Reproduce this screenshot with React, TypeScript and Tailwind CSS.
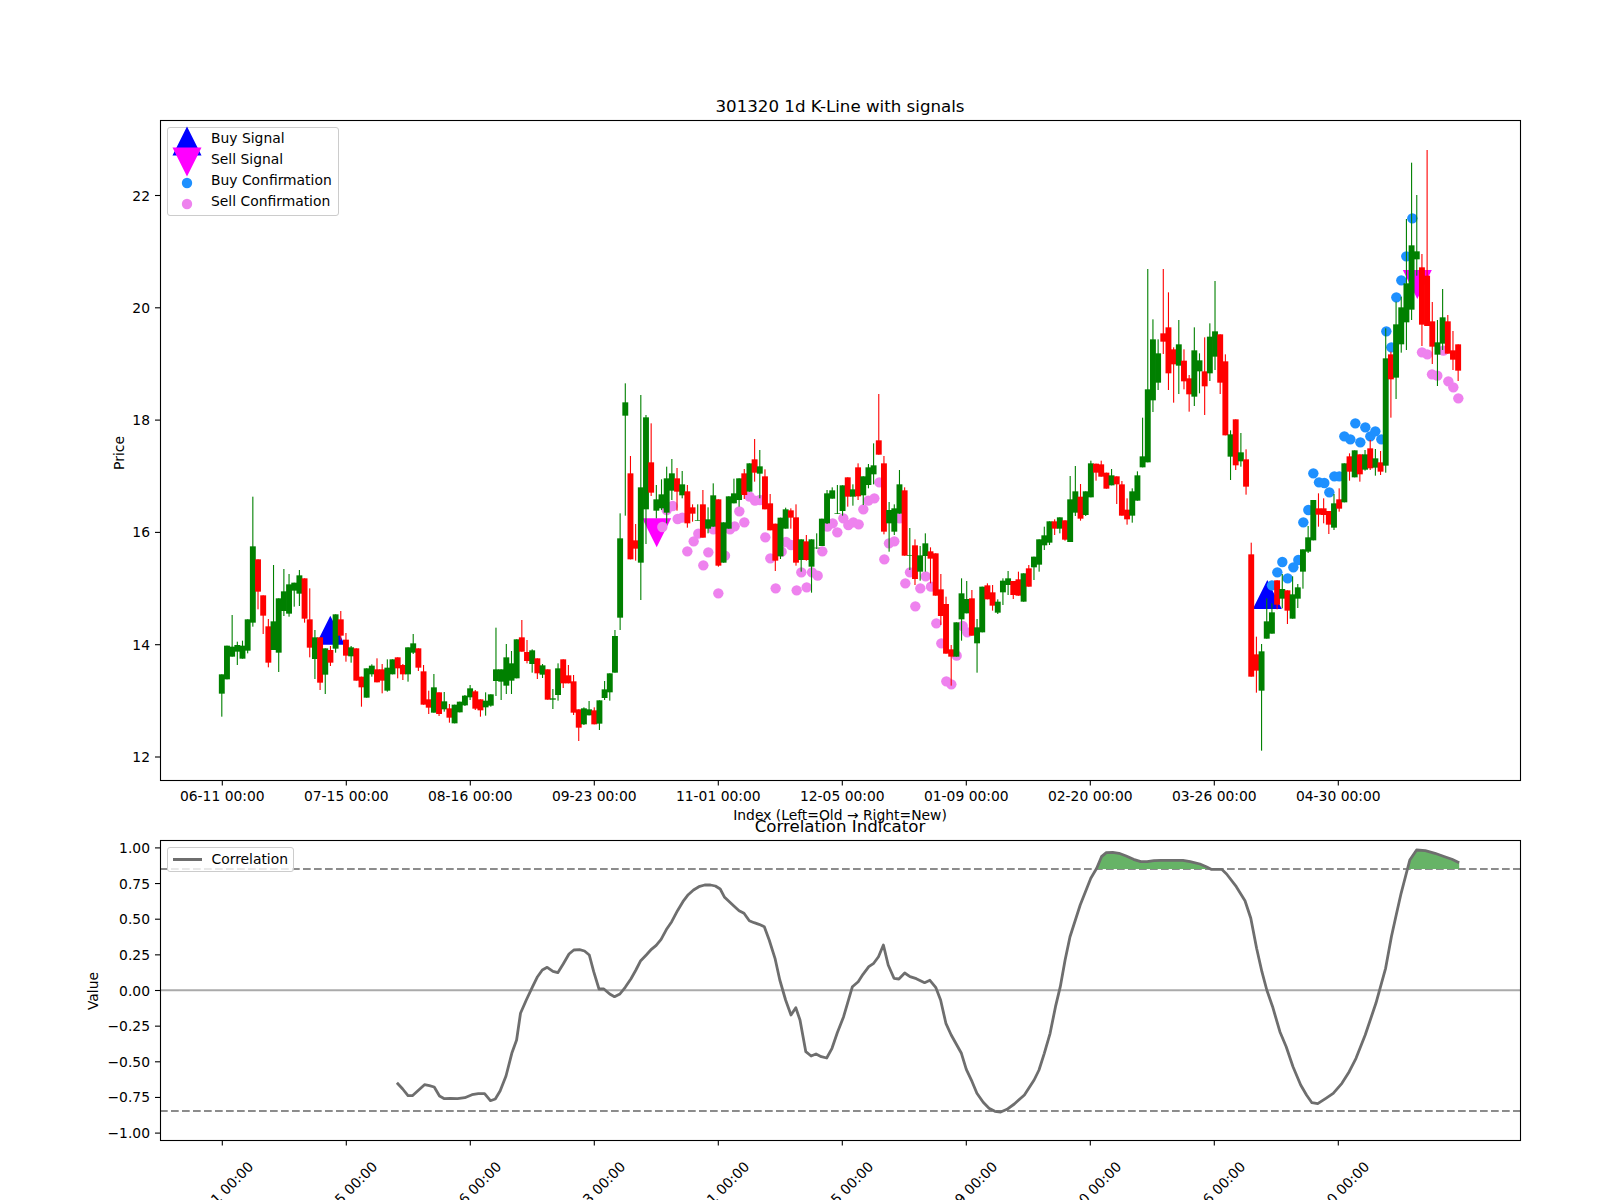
type Candle = ["g" | "r", number, number, number, number];

// candle rows: colour, wick top, body top, body bottom, wick bottom (read off 3x crops, see y0)
const segments: { y0: number; rows: Candle[] }[] = [
  {
    y0: 450,
    rows: [
      ["g",673,673,731,800],["g",587,587,688,688],["g",495,590,620,620],["g",575,585,605,645],["g",572,587,626,626],["g",508,508,602,610],
      ["g",140,289,518,530],["r",328,328,425,478],["r",436,436,497,552],["r",507,529,638,652],["g",345,514,600,600],["g",445,445,608,666],
      ["g",357,424,483,498],["g",372,403,491,500],["g",398,398,422,470],["g",360,376,431,468],["r",385,385,506,518],["r",415,508,593,622],
      ["g",540,562,627,687],["r",562,562,698,720],["g",595,595,674,732],["r",588,600,638,648],["g",493,493,596,608],["r",483,508,557,570],
      ["r",549,569,617,635],["g",588,592,619,638],["r",595,595,692,692],["r",680,680,712,770],["g",655,655,743,743],["g",643,647,673,680],
      ["r",625,658,697,697],["r",642,658,692,730],["g",628,653,722,725],["g",628,628,673,673],["r",622,622,655,685],["r",642,645,673,690],
      ["g",592,592,673,695],["g",552,580,608,612],["r",595,595,653,663],["r",645,664,764,764],["r",722,748,773,792],["g",672,712,788,788],
      ["r",727,727,792,798],["g",726,754,778,785],["r",762,775,803,818],["g",764,764,820,820],["g",755,755,787,787],["g",735,737,766,768],
      ["g",705,715,742,750],["r",720,724,776,780],["r",748,748,781,800],["g",727,752,772,797],["g",733,733,767,770],["g",533,658,693,738],
      ["g",658,658,695,750],["g",582,622,707,732],["g",603,640,692,732],["g",568,568,685,685],["r",510,562,605,605],["r",570,606,633,640],
      ["g",598,601,642,668],["r",625,625,670,687],["g",642,646,674,684],["r",658,658,749,749],["g",717,745,749,777],["g",640,655,735,752],
      ["r",628,628,700,714],["r",645,676,700,700],["r",675,694,788,795],["r",778,778,833,873],["g",772,775,823,825],["g",753,778,796,796],
      ["r",772,781,823,823],["g",751,751,821,840],["g",693,718,744,750],["g",670,670,727,752],
    ],
  },
  {
    y0: 370,
    rows: [
      ["g",780,798,908,908],["g",430,505,743,780],["g",40,97,137,437],["r",258,310,568,568],["r",462,511,536,572],["g",75,352,578,690],
      ["g",135,142,418,522],["r",160,277,368,378],["g",345,388,422,445],["g",328,373,415,420],["g",290,325,428,460],["g",267,310,362,390],
      ["r",294,325,365,422],["g",303,343,376,385],["r",345,364,460,473],["r",403,412,431,455],["g",403,450,452,452],["r",360,403,503,503],
      ["g",412,448,476,490],["g",340,376,470,470],["r",388,388,587,590],["g",457,457,578,578],["g",379,379,476,476],["g",326,370,400,400],
      ["g",325,325,390,410],["r",297,310,375,387],["g",280,280,365,365],["r",207,268,308,335],["g",240,289,311,385],["r",298,319,418,418],
      ["r",372,400,481,481],["r",461,461,572,603],["g",443,443,559,567],["g",413,418,476,476],["r",415,421,443,476],["r",403,442,578,587],
      ["g",508,508,570,605],["r",495,514,570,572],["g",508,508,590,668],["g",490,533,535,537],["g",446,446,528,528],["g",360,370,460,462],
      ["g",352,361,386,386],["g",345,430,432,432],["g",346,346,423,437],["r",322,322,380,410],["g",343,358,380,407],["r",280,292,379,390],
      ["g",319,319,376,405],["g",282,292,345,355],["g",220,286,313,343],["r",72,211,254,254],["r",258,280,485,493],["g",396,420,460,545],
      ["g",403,415,485,495],["g",300,343,431,431],["r",352,361,557,557],["g",474,555,557,600],["r",508,526,627,645],["g",528,556,605,632],
      ["g",490,520,558,605],["r",532,544,566,640],["r",550,550,677,677],["r",612,658,738,765],["r",680,702,851,851],["r",825,838,860,947],
    ],
  },
  {
    y0: 250,
    rows: [
      ["g",1117,1117,1220,1220],["g",985,1030,1108,1172],["g",993,1047,1090,1090],["r",1020,1045,1157,1157],["g",1107,1132,1180,1268],
      ["g",1010,1010,1147,1147],["r",1000,1006,1048,1048],["r",1005,1027,1067,1082],["g",1048,1055,1088,1092],["g",985,992,1027,1065],
      ["g",963,985,1005,1035],["r",993,993,1035,1047],["r",965,988,1037,1037],["g",970,970,1055,1055],["r",945,955,1010,1010],
      ["g",920,920,952,990],["g",868,868,944,965],["g",830,856,886,900],["g",814,814,878,885],["r",808,814,836,855],["g",802,802,836,850],
      ["r",811,811,869,872],["g",678,748,876,876],["g",648,724,788,798],["r",702,740,806,812],["g",724,724,795,798],["g",632,640,742,742],
      ["r",641,641,668,692],["r",632,643,680,680],["r",668,668,716,716],["g",657,676,706,706],["r",679,679,703,762],["r",693,703,797,797],
      ["r",745,779,808,824],["g",715,724,797,818],["g",664,676,752,752],["g",503,619,652,652],["g",57,418,637,637],["g",208,268,451,486],
      ["g",268,310,398,420],["r",57,250,275,312],["r",127,232,370,420],["r",292,298,343,458],["g",210,283,347,432],["r",298,332,394,418],
      ["r",375,385,433,485],["g",232,301,440,468],["g",310,331,364,430],["r",262,364,409,495],["g",220,260,370,393],["g",93,244,320,360],
      ["r",253,253,398,432],["r",313,334,556,556],["g",541,553,620,690],["r",508,508,646,660],["g",549,607,634,650],["r",598,628,710,734],
    ],
  },
  {
    y0: 480,
    rows: [
      ["r",188,223,590,590],["r",470,523,572,638],["g",492,514,632,812],["g",355,424,476,476],["g",370,397,461,461],["r",301,301,374,388],
      ["g",282,327,356,385],["r",331,331,392,432],["g",289,343,416,416],["g",312,322,356,384],["g",208,208,275,326],["g",138,172,215,219],
      ["g",60,60,181,181],["r",40,85,104,140],["r",55,85,105,130],["r",93,93,134,162],["g",42,70,143,150],["r",25,58,86,95],
    ],
  },
  {
    y0: 130,
    rows: [
      ["g",1000,1000,1117,1117],["r",970,979,1025,1052],["g",961,961,1042,1042],["r",973,973,1033,1055],["g",960,973,1019,1022],
      ["r",930,955,1015,1020],["g",957,985,1013,1037],["r",963,997,1025,1035],["g",595,685,1007,1028],["r",665,673,748,863],
      ["g",515,583,743,807],["g",500,532,643,668],["g",267,460,577,660],["g",98,346,539,570],["g",195,364,388,437],["r",372,412,584,648],
      ["r",60,437,588,588],["r",516,574,650,702],["g",570,637,674,768],["g",477,562,641,660],["r",555,574,671,671],["r",603,661,689,720],
      ["r",643,643,722,753],
    ],
  },
];

const candles = segments.flatMap((s) =>
  s.rows.map((r) => ({
    up: r[0] === "g",
    high: s.y0 + r[1] / 3,
    top: s.y0 + r[2] / 3,
    bottom: s.y0 + r[3] / 3,
    low: s.y0 + r[4] / 3,
  }))
);

const candleX = (i: number) => 221.8 + 5.173 * i;

const from3x = (x0: number, y0: number, pts: number[][]) => pts.map(([x, y]) => [x0 + x / 3, y0 + y / 3]);

const sellDots = [
  ...from3x(600, 370, [
    [200,420],[218,408],[187,471],[233,447],[247,443],[262,544],[281,514],[295,491],[310,586],[325,547],[340,478],[355,670],[375,557],
    [390,478],[404,469],[418,424],[433,457],[449,380],[465,392],[480,390],[496,502],[511,565],[527,655],[545,545],[558,516],[573,525],
    [590,661],[604,607],[620,652],[636,607],[653,617],[667,544],[682,470],[698,460],[712,487],[730,445],[745,465],[760,457],[776,463],
    [790,418],[805,392],[823,385],[838,337],[853,568],[867,520],[883,514],[899,445],[916,640],[930,607],[946,709],[961,655],[977,619],
    [993,650],[1009,760],[1024,820],[1039,934],[1054,943],[1070,857],[1088,768],[1102,787],
  ]),
  ...from3x(1230, 130, [[576,667],[592,673],[606,733],[622,737],[640,662],[655,754],[670,772],[685,805]]),
];

const buyDots = [
  ...from3x(1230, 480, [[126,316],[142,277],[157,246],[173,295],[190,262],[205,240]]),
  ...from3x(1230, 130, [
    [220,1177],[235,1140],[250,1030],[267,1057],[283,1059],[298,1087],[313,1039],[328,1039],[343,919],[361,928],[376,880],[391,937],
    [406,892],[421,919],[436,904],[454,928],[469,604],[484,652],[499,502],[514,451],[529,379],[547,265],
  ]),
];

const dateTicks = ["06-11", "07-15", "08-16", "09-23", "11-01", "12-05", "01-09", "02-20", "03-26", "04-30"].map((d, i) => ({
  label: `${d} 00:00`,
  x: 222.3 + 124 * i,
}));

const priceTicks = [22, 20, 18, 16, 14, 12].map((p) => ({ label: String(p), y: 757 - (p - 12) * 56.15 }));

const corrTicks = ["1.00", "0.75", "0.50", "0.25", "0.00", "\u22120.25", "\u22120.50", "\u22120.75", "\u22121.00"].map((label, i) => ({
  label,
  y: 847.9 + 35.65 * i,
}));

// correlation curve, two crops squeezed to 2.063x horizontally and 3x vertically
const curveA = [
  [695,878],[707,897],[718,917],[727,917],[740,900],[752,884],[762,887],[772,891],[783,918],[793,926],[805,925],[820,926],[835,923],[850,914],
  [863,911],[876,911],[888,932],[898,927],[908,903],[920,858],[932,790],[942,750],[950,670],[962,630],[975,590],[985,560],[995,540],[1005,532],
  [1017,544],[1027,548],[1038,522],[1050,492],[1060,480],[1072,479],[1082,483],[1092,495],[1101,545],[1112,597],[1122,597],[1134,612],[1144,620],
  [1155,612],[1166,592],[1178,566],[1188,540],[1198,512],[1210,494],[1220,478],[1230,466],[1240,448],[1252,416],[1262,395],[1274,362],[1285,335],
  [1296,314],[1307,300],[1318,290],[1330,285],[1342,285],[1352,288],[1362,297],[1371,322],[1382,337],[1392,350],[1401,362],[1411,370],[1422,392],
  [1432,398],[1442,403],[1453,410],[1463,450],[1475,505],[1485,570],[1497,630],[1508,675],[1518,653],
];
const curveB = [
  [0,690],[12,785],[23,798],[33,792],[44,800],[55,804],[66,775],[77,728],[90,680],[98,640],[108,590],[120,575],[130,553],[142,530],[152,520],[162,500],
  [172,465],[182,525],[194,565],[204,567],[216,549],[227,560],[240,566],[257,578],[268,571],[280,592],[290,630],[301,700],[312,735],[333,790],[343,838],
  [355,875],[365,910],[378,937],[390,955],[402,964],[414,966],[427,958],[442,942],[463,915],[483,870],[493,840],[504,790],[516,730],[527,650],[537,590],
  [547,510],[557,440],[578,345],[600,265],[612,235],[622,200],[632,188],[645,187],[658,190],[673,198],[688,208],[703,215],[716,215],[730,212],[745,211],
  [770,211],[790,211],[805,215],[825,222],[838,230],[848,238],[870,238],[880,252],[900,290],[918,332],[930,385],[942,475],[953,545],[963,600],[975,650],
  [990,725],[1003,770],[1017,830],[1033,885],[1045,915],[1056,938],[1068,941],[1085,925],[1100,910],[1118,880],[1133,845],[1147,805],[1166,735],[1188,640],
  [1208,535],[1220,440],[1230,375],[1240,310],[1258,210],[1272,180],[1290,182],[1310,190],[1330,200],[1345,208],[1360,218],
];
const toFig = (x0: number) => (p: number[]) => [x0 + p[0] / 2.063, 790 + p[1] / 3];
const pts = (list: number[][]) => list.map((p) => p.map((n) => n.toFixed(1)).join(",")).join(" ");
const corrLine = [...curveA.map(toFig(60)), ...curveB.map(toFig(800))];

const band1 = [[610,237], ...curveB.filter((p) => p[0] > 612 && p[0] < 848), [848,237]].map(toFig(800));
const band2 = [[1255,237], ...curveB.filter((p) => p[0] >= 1258), [1360,237]].map(toFig(800));

const triUp = (x: number, top: number) => `${x},${top} ${x - 14.5},${top + 29} ${x + 14.5},${top + 29}`;
const triDown = (x: number, top: number) => `${x - 14.5},${top} ${x + 14.5},${top} ${x},${top + 29}`;

const BUY_BLUE = "#1e90ff";
const SELL_PINK = "#ee82ee";

const XTicks = ({ y }: { y: number }) => (
  <>
    {dateTicks.map((t) => (
      <line key={t.x} x1={t.x} x2={t.x} y1={y} y2={y + 5} stroke="black" strokeWidth="1.1" />
    ))}
  </>
);

const YTicks = ({ ticks }: { ticks: { label: string; y: number }[] }) => (
  <>
    {ticks.map((t) => (
      <g key={t.label}>
        <line x1={155} x2={160} y1={t.y} y2={t.y} stroke="black" strokeWidth="1.1" />
        <text x={150} y={t.y + 5} textAnchor="end" fontSize="13.89" fill="black">
          {t.label}
        </text>
      </g>
    ))}
  </>
);

const PriceChart = () => (
  <svg viewBox="160 120 1360 660" className="block w-[1360px] h-[660px] overflow-visible">
    <polygon points={triUp(330.3, 615.7)} fill="#0000ff" />
    <polygon points={triDown(656.7, 518.3)} fill="#ff00ff" />
    <polygon points={triUp(1267.3, 580)} fill="#0000ff" />
    <polygon points={triDown(1417.3, 270)} fill="#ff00ff" />
    {sellDots.map(([x, y], i) => (
      <circle key={i} cx={x} cy={y} r="5.2" fill={SELL_PINK} />
    ))}
    {buyDots.map(([x, y], i) => (
      <circle key={i} cx={x} cy={y} r="5.2" fill={BUY_BLUE} />
    ))}
    {candles.map((c, i) => (
      <g key={i} fill={c.up ? "#008000" : "#ff0000"}>
        <rect x={candleX(i) - 0.55} y={c.high} width="1.1" height={c.low - c.high} />
        <rect x={candleX(i) - 2.95} y={c.top} width="5.9" height={c.bottom - c.top} />
      </g>
    ))}
    <rect x="160.5" y="120.5" width="1360" height="660" fill="none" stroke="black" strokeWidth="1.1" />
    <XTicks y={780.5} />
    {dateTicks.map((t) => (
      <text key={t.x} x={t.x} y={801} textAnchor="middle" fontSize="13.89" fill="black">
        {t.label}
      </text>
    ))}
    <YTicks ticks={priceTicks} />
    <text transform="translate(124 453) rotate(-90)" textAnchor="middle" fontSize="13.89" fill="black">
      Price
    </text>
  </svg>
);

const CorrelationChart = () => (
  <svg viewBox="160 840 1360 300" className="block w-[1360px] h-[300px] overflow-visible">
    <line x1="160" x2="1520" y1="990.3" y2="990.3" stroke="#aaaaaa" strokeWidth="2" />
    <line x1="160" x2="1520" y1="869" y2="869" stroke="#8c8c8c" strokeWidth="2" strokeDasharray="7.7 3.3" />
    <line x1="160" x2="1520" y1="1111" y2="1111" stroke="#8c8c8c" strokeWidth="2" strokeDasharray="7.7 3.3" />
    <polygon points={pts(band1)} fill="#66b366" />
    <polygon points={pts(band2)} fill="#66b366" />
    <polyline points={pts(corrLine)} fill="none" stroke="#6e6e6e" strokeWidth="2.8" strokeLinejoin="round" />
    <rect x="160.5" y="840.5" width="1360" height="300" fill="none" stroke="black" strokeWidth="1.1" />
    <XTicks y={1140.5} />
    {dateTicks.map((t) => (
      <text
        key={t.x}
        transform={`translate(${t.x - 1.5} 1194) rotate(-45)`}
        textAnchor="middle"
        dy="5"
        fontSize="13.89"
        fill="black"
      >
        {t.label}
      </text>
    ))}
    <YTicks ticks={corrTicks} />
    <text transform="translate(98 991) rotate(-90)" textAnchor="middle" fontSize="13.89" fill="black">
      Value
    </text>
  </svg>
);

const legendRows = [
  { label: "Buy Signal", mark: <polygon points="14,-1.5 -0.5,27.5 28.5,27.5" fill="#0000ff" /> },
  { label: "Sell Signal", mark: <polygon points="-0.5,-1.5 28.5,-1.5 14,27.5" fill="#ff00ff" /> },
  { label: "Buy Confirmation", mark: <circle cx="14" cy="13" r="5.2" fill={BUY_BLUE} /> },
  { label: "Sell Confirmation", mark: <circle cx="14" cy="13" r="5.2" fill={SELL_PINK} /> },
];

const PriceLegend = () => (
  <div className="absolute left-[7px] top-[7px] w-[172px] h-[89px] rounded-[3px] border border-[#cccccc] bg-white/80 pl-[5px]">
    {legendRows.map((row) => (
      <div key={row.label} className="flex items-center h-[21px] text-[13.89px] leading-none text-black">
        <svg viewBox="0 0 28 21" className="w-[28px] h-[21px] overflow-visible">
          {row.mark}
        </svg>
        <span className="ml-[10px] whitespace-nowrap">{row.label}</span>
      </div>
    ))}
  </div>
);

const CorrelationLegend = () => (
  <div className="absolute left-[7px] top-[7px] flex items-center w-[127px] h-[25px] rounded-[3px] border border-[#cccccc] bg-white/80 pl-[5px] text-[13.89px] leading-none text-black">
    <span className="block w-[29px] h-[3px] bg-[#6e6e6e]" />
    <span className="ml-[9.5px]">Correlation</span>
  </div>
);

export default function App() {
  return (
    <div className="w-[1600px] h-[1200px] overflow-hidden bg-white pl-[160px] font-['DejaVu_Sans',sans-serif]">
      <div className="w-[1360px]">
        <h2 className="flex h-[120px] items-end justify-center pb-[3px] text-[16.67px] font-normal leading-[20px] text-black">
          301320 1d K-Line with signals
        </h2>
        <div className="relative h-[660px]">
          <PriceChart />
          <PriceLegend />
        </div>
        <div className="flex h-[60px] flex-col items-center text-black">
          <p className="mt-[27px] h-[16px] text-[13.89px] leading-[16px]">Index (Left=Old → Right=New)</p>
          <h2 className="-mt-[6px] h-[20px] text-[16.67px] font-normal leading-[20px]">Correlation Indicator</h2>
        </div>
        <div className="relative h-[300px]">
          <CorrelationChart />
          <CorrelationLegend />
        </div>
      </div>
    </div>
  );
}
